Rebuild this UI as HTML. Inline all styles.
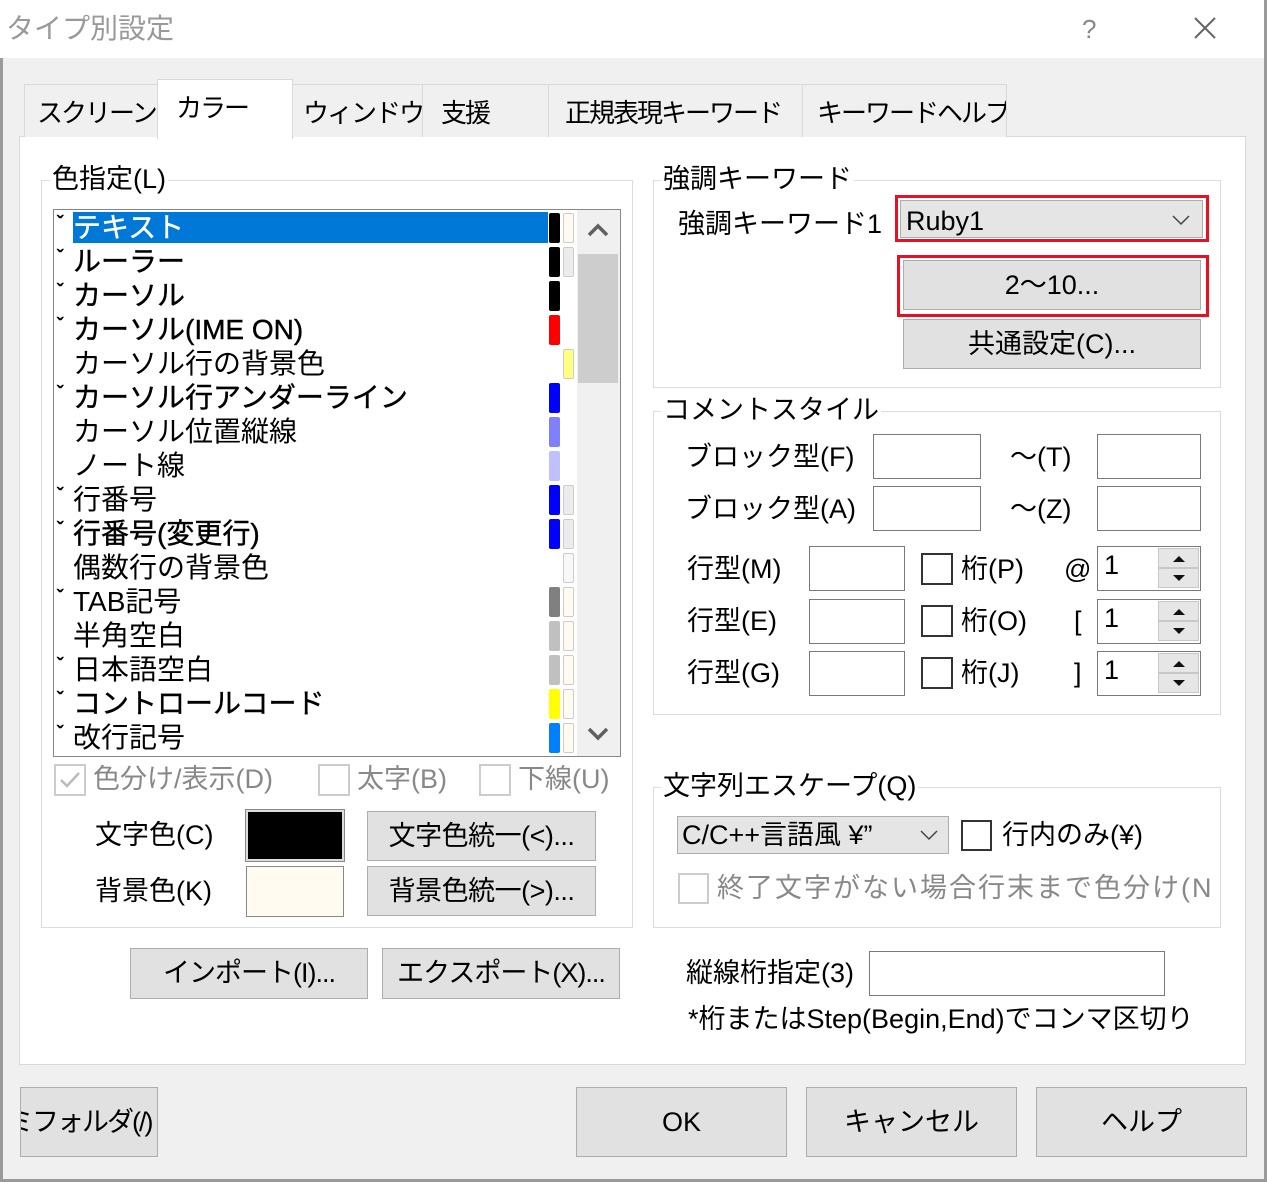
<!DOCTYPE html>
<html><head><meta charset="utf-8">
<style>
*{margin:0;padding:0;box-sizing:border-box}
body{width:1267px;height:1182px;position:relative;background:#f0f0f0;font-family:"Liberation Sans","Noto Sans CJK JP",sans-serif;font-size:27px;color:#000;overflow:hidden}
.a{position:absolute}
.t{position:absolute;line-height:34px;white-space:nowrap}
.box{position:absolute;border:1px solid #dcdcdc}
.lbl{position:absolute;line-height:34px;background:#fff;padding:0 2px;white-space:nowrap}
.btn{position:absolute;background:#e1e1e1;border:1px solid #adadad;text-align:center;white-space:nowrap}
.inp{position:absolute;background:#fff;border:1px solid #7a7a7a}
.cb{position:absolute;width:32px;height:32px;border:2px solid #333;background:#fff}
.tab{position:absolute;top:84px;height:53px;background:#f0f0f0;border:1px solid #d9d9d9;border-bottom:none;line-height:56px;padding-left:10px;white-space:nowrap;overflow:hidden;letter-spacing:-2px;font-size:26px}
.row{position:absolute;left:73px;height:34px;line-height:34px;white-space:nowrap;font-size:28px}
.b{-webkit-text-stroke:0.4px currentColor}
.chk{position:absolute;left:57px;font-size:20px;line-height:20px;-webkit-text-stroke:0.6px #000}
.sw{position:absolute;width:11px;height:30px;border-radius:2px}
.spin{position:absolute;left:1158px;width:41px;height:20px;background:#e6e6e6;border:1px solid #c8c8c8}
</style></head><body>
<div class="a" style="left:0;top:0;width:1267px;height:58px;background:#fff"></div>
<div class="a" style="left:0;top:58px;width:3px;height:1124px;background:#9a9a9a"></div>
<div class="a" style="left:1264px;top:0;width:3px;height:1182px;background:#9a9a9a"></div>
<div class="a" style="left:0;top:1179px;width:1267px;height:3px;background:#9a9a9a"></div>
<div class="t" style="left:6px;top:12px;color:#999;font-size:28px">タイプ別設定</div>
<div class="t" style="left:1082px;top:12px;color:#888;font-size:26px">?</div>
<svg class="a" style="left:1194px;top:17px" width="22" height="22"><path d="M1 1L21 21M21 1L1 21" stroke="#666" stroke-width="2"/></svg>

<div class="a" style="left:19px;top:136px;width:1227px;height:929px;background:#fff;border:1px solid #d9d9d9"></div>
<div class="tab" style="left:24px;width:134px;padding-left:12px">スクリーン</div>
<div class="tab" style="left:292px;width:131px;padding-left:10px">ウィンドウ</div>
<div class="tab" style="left:422px;width:127px;padding-left:18px">支援</div>
<div class="tab" style="left:548px;width:255px;padding-left:16px">正規表現キーワード</div>
<div class="tab" style="left:802px;width:205px;padding-left:14px">キーワードヘルプ</div>
<div class="a" style="left:157px;top:79px;width:136px;height:60px;background:#fff;border:1px solid #d9d9d9;border-bottom:none;line-height:56px;padding-left:18px;letter-spacing:-2px;font-size:26px;white-space:nowrap">カラー</div>

<div class="box" style="left:41px;top:180px;width:592px;height:748px"></div>
<div class="lbl" style="left:50px;top:162px">色指定(L)</div>
<div class="a" style="left:53px;top:209px;width:568px;height:548px;background:#fff;border:1px solid #828790"></div>
<div class="a" style="left:73px;top:212px;width:475px;height:31px;background:#0078d7"></div>
<div class="a" style="left:577px;top:210px;width:43px;height:546px;background:#f0f0f0"></div>
<div class="a" style="left:578px;top:254px;width:40px;height:129px;background:#cdcdcd"></div>
<svg class="a" style="left:587px;top:222px" width="22" height="16"><path d="M2 13L11 4L20 13" stroke="#606060" stroke-width="3.5" fill="none"/></svg>
<svg class="a" style="left:587px;top:726px" width="22" height="16"><path d="M2 3L11 12L20 3" stroke="#606060" stroke-width="3.5" fill="none"/></svg>

<div class="row b" style="top:211px;color:#fff">テキスト</div>
<div class="row b" style="top:245px">ルーラー</div>
<div class="row b" style="top:279px">カーソル</div>
<div class="row b" style="top:313px">カーソル(IME ON)</div>
<div class="row" style="top:347px">カーソル行の背景色</div>
<div class="row b" style="top:381px">カーソル行アンダーライン</div>
<div class="row" style="top:415px">カーソル位置縦線</div>
<div class="row" style="top:449px">ノート線</div>
<div class="row" style="top:483px">行番号</div>
<div class="row b" style="top:517px">行番号(変更行)</div>
<div class="row" style="top:551px">偶数行の背景色</div>
<div class="row" style="top:585px">TAB記号</div>
<div class="row" style="top:619px">半角空白</div>
<div class="row" style="top:653px">日本語空白</div>
<div class="row b" style="top:687px">コントロールコード</div>
<div class="row" style="top:721px">改行記号</div>
<div class="chk" style="top:214px">ˇ</div><div class="chk" style="top:248px">ˇ</div><div class="chk" style="top:282px">ˇ</div><div class="chk" style="top:316px">ˇ</div><div class="chk" style="top:384px">ˇ</div><div class="chk" style="top:486px">ˇ</div><div class="chk" style="top:520px">ˇ</div><div class="chk" style="top:588px">ˇ</div><div class="chk" style="top:656px">ˇ</div><div class="chk" style="top:690px">ˇ</div><div class="chk" style="top:724px">ˇ</div>

<div class="sw" style="left:549px;top:213px;background:#000"></div><div class="sw" style="left:563px;top:213px;background:#fffbf0;border:1px solid #ccc"></div>
<div class="sw" style="left:549px;top:247px;background:#000"></div><div class="sw" style="left:563px;top:247px;background:#ececec;border:1px solid #ccc"></div>
<div class="sw" style="left:549px;top:281px;background:#000"></div>
<div class="sw" style="left:549px;top:315px;background:#f00"></div>
<div class="sw" style="left:563px;top:349px;background:#ffff80;border:1px solid #ccc"></div>
<div class="sw" style="left:549px;top:383px;background:#00f"></div>
<div class="sw" style="left:549px;top:417px;background:#8080ff"></div>
<div class="sw" style="left:549px;top:451px;background:#c0c0ff"></div>
<div class="sw" style="left:549px;top:485px;background:#00f"></div><div class="sw" style="left:563px;top:485px;background:#ececec;border:1px solid #ccc"></div>
<div class="sw" style="left:549px;top:519px;background:#00f"></div><div class="sw" style="left:563px;top:519px;background:#ececec;border:1px solid #ccc"></div>
<div class="sw" style="left:563px;top:553px;background:#f8f8f8;border:1px solid #ccc"></div>
<div class="sw" style="left:549px;top:587px;background:#808080"></div><div class="sw" style="left:563px;top:587px;background:#fffbf0;border:1px solid #ccc"></div>
<div class="sw" style="left:549px;top:621px;background:#c0c0c0"></div><div class="sw" style="left:563px;top:621px;background:#fffbf0;border:1px solid #ccc"></div>
<div class="sw" style="left:549px;top:655px;background:#c0c0c0"></div><div class="sw" style="left:563px;top:655px;background:#fffbf0;border:1px solid #ccc"></div>
<div class="sw" style="left:549px;top:689px;background:#ff0"></div><div class="sw" style="left:563px;top:689px;background:#fffbf0;border:1px solid #ccc"></div>
<div class="sw" style="left:549px;top:723px;background:#0080ff"></div><div class="sw" style="left:563px;top:723px;background:#fffbf0;border:1px solid #ccc"></div>

<div class="cb" style="left:54px;top:764px;border-color:#ccc"></div>
<svg class="a" style="left:58px;top:768px" width="24" height="24"><path d="M3 12L9 18L21 5" stroke="#bbb" stroke-width="2.5" fill="none"/></svg>
<div class="t" style="left:93px;top:762px;color:#888">色分け/表示(D)</div>
<div class="cb" style="left:318px;top:764px;border-color:#ccc"></div>
<div class="t" style="left:357px;top:762px;color:#888">太字(B)</div>
<div class="cb" style="left:479px;top:764px;border-color:#ccc"></div>
<div class="t" style="left:518px;top:762px;color:#888">下線(U)</div>

<div class="t" style="left:95px;top:818px">文字色(C)</div>
<div class="a" style="left:246px;top:810px;width:98px;height:51px;background:#000;border:2px solid #ddd;outline:1px solid #888"></div>
<div class="btn" style="left:367px;top:811px;width:229px;height:50px;line-height:48px;letter-spacing:-0.5px">文字色統一(&lt;)...</div>
<div class="t" style="left:95px;top:874px">背景色(K)</div>
<div class="a" style="left:246px;top:866px;width:98px;height:51px;background:#fffbf0;border:1px solid #888"></div>
<div class="btn" style="left:367px;top:866px;width:229px;height:50px;line-height:48px;letter-spacing:-0.5px">背景色統一(&gt;)...</div>

<div class="btn" style="left:130px;top:948px;width:238px;height:51px;line-height:49px;letter-spacing:-1px">インポート(I)...</div>
<div class="btn" style="left:382px;top:948px;width:238px;height:51px;line-height:49px;letter-spacing:-1px">エクスポート(X)...</div>

<div class="box" style="left:653px;top:180px;width:568px;height:208px"></div>
<div class="lbl" style="left:661px;top:162px">強調キーワード</div>
<div class="t" style="left:678px;top:207px">強調キーワード1</div>
<div class="a" style="left:895px;top:195px;width:314px;height:47px;border:3px solid #e81123"></div>
<div class="a" style="left:900px;top:200px;width:303px;height:38px;background:#e5e5e5;border:1px solid #adadad"></div>
<div class="t" style="left:906px;top:204px">Ruby1</div>
<svg class="a" style="left:1172px;top:214px" width="18" height="12"><path d="M1 2L9 10L17 2" stroke="#444" stroke-width="1.5" fill="none"/></svg>
<div class="a" style="left:897px;top:255px;width:312px;height:62px;border:3px solid #e81123"></div>
<div class="btn" style="left:903px;top:260px;width:298px;height:50px;line-height:48px">2～10...</div>
<div class="btn" style="left:903px;top:319px;width:298px;height:50px;line-height:48px">共通設定(C)...</div>

<div class="box" style="left:653px;top:411px;width:568px;height:304px"></div>
<div class="lbl" style="left:661px;top:393px">コメントスタイル</div>
<div class="t" style="left:685px;top:440px">ブロック型(F)</div>
<div class="inp" style="left:873px;top:434px;width:108px;height:45px"></div>
<div class="t" style="left:1010px;top:440px">～(T)</div>
<div class="inp" style="left:1097px;top:434px;width:104px;height:45px"></div>
<div class="t" style="left:685px;top:492px">ブロック型(A)</div>
<div class="inp" style="left:873px;top:486px;width:108px;height:45px"></div>
<div class="t" style="left:1010px;top:492px">～(Z)</div>
<div class="inp" style="left:1097px;top:486px;width:104px;height:45px"></div>

<div class="t" style="left:687px;top:552px">行型(M)</div>
<div class="inp" style="left:809px;top:546px;width:96px;height:45px"></div>
<div class="cb" style="left:921px;top:553px"></div>
<div class="t" style="left:961px;top:552px">桁(P)</div>
<div class="t" style="left:1064px;top:552px">@</div>
<div class="inp" style="left:1097px;top:546px;width:104px;height:45px"></div>
<div class="t" style="left:1104px;top:548px">1</div>
<div class="spin" style="top:548px"></div><div class="spin" style="top:568px"></div>

<div class="t" style="left:687px;top:604px">行型(E)</div>
<div class="inp" style="left:809px;top:599px;width:96px;height:45px"></div>
<div class="cb" style="left:921px;top:605px"></div>
<div class="t" style="left:961px;top:604px">桁(O)</div>
<div class="t" style="left:1074px;top:604px">[</div>
<div class="inp" style="left:1097px;top:599px;width:104px;height:45px"></div>
<div class="t" style="left:1104px;top:601px">1</div>
<div class="spin" style="top:601px"></div><div class="spin" style="top:621px"></div>

<div class="t" style="left:687px;top:656px">行型(G)</div>
<div class="inp" style="left:809px;top:651px;width:96px;height:45px"></div>
<div class="cb" style="left:921px;top:657px"></div>
<div class="t" style="left:961px;top:656px">桁(J)</div>
<div class="t" style="left:1074px;top:656px">]</div>
<div class="inp" style="left:1097px;top:651px;width:104px;height:45px"></div>
<div class="t" style="left:1104px;top:653px">1</div>
<div class="spin" style="top:653px"></div><div class="spin" style="top:673px"></div>
<svg class="a" style="left:1158px;top:548px" width="42" height="146" fill="#111">
<path d="M15 14L21 8L27 14Z"/><path d="M15 27L21 33L27 27Z"/>
<path d="M15 67L21 61L27 67Z"/><path d="M15 80L21 86L27 80Z"/>
<path d="M15 119L21 113L27 119Z"/><path d="M15 132L21 138L27 132Z"/>
</svg>

<div class="box" style="left:653px;top:787px;width:568px;height:141px"></div>
<div class="lbl" style="left:661px;top:769px">文字列エスケープ(Q)</div>
<div class="a" style="left:677px;top:816px;width:272px;height:38px;background:#e5e5e5;border:1px solid #adadad"></div>
<div class="t" style="left:682px;top:818px">C/C++言語風 ¥”</div>
<svg class="a" style="left:920px;top:829px" width="18" height="12"><path d="M1 2L9 10L17 2" stroke="#444" stroke-width="1.5" fill="none"/></svg>
<div class="cb" style="left:961px;top:820px;width:31px;height:31px"></div>
<div class="t" style="left:1002px;top:818px">行内のみ(¥)</div>
<div class="cb" style="left:678px;top:873px;width:31px;height:31px;border-color:#ccc"></div>
<div class="a" style="left:717px;top:871px;width:493px;overflow:hidden;line-height:34px;white-space:nowrap;color:#888;letter-spacing:2px">終了文字がない場合行末まで色分け(N)</div>

<div class="t" style="left:686px;top:956px">縦線桁指定(3)</div>
<div class="inp" style="left:869px;top:951px;width:296px;height:45px"></div>
<div class="t" style="left:688px;top:1002px">*桁またはStep(Begin,End)でコンマ区切り</div>

<div class="btn" style="left:20px;top:1087px;width:138px;height:70px;line-height:68px;overflow:hidden;text-align:left;letter-spacing:-2px"><span style="margin-left:-14px">ミフォルダ(/)</span></div>
<div class="btn" style="left:576px;top:1087px;width:211px;height:70px;line-height:68px">OK</div>
<div class="btn" style="left:806px;top:1087px;width:211px;height:70px;line-height:68px">キャンセル</div>
<div class="btn" style="left:1036px;top:1087px;width:211px;height:70px;line-height:68px">ヘルプ</div>
</body></html>
